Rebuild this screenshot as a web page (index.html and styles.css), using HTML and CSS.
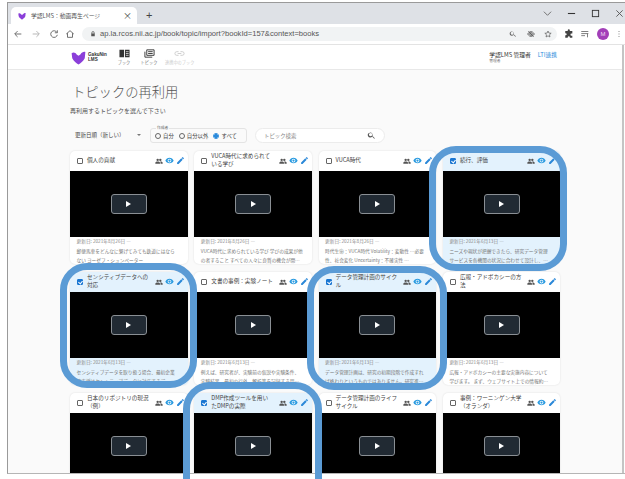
FILE: index.html
```html
<!DOCTYPE html>
<html lang="ja">
<head>
<meta charset="utf-8">
<title>学認LMS：動画再生ページ</title>
<link rel="stylesheet" href="styles.css">
</head>
<body>
<svg class="defs" width="0" height="0" aria-hidden="true">
  <symbol id="heart" viewBox="0 0 24 24"><path d="M1 5C4 3 7 4 9 7L12 9L15 7C17 4 20 2 23 3L22 13C20 18 15 21 12 23C9 21 4 18 2 13Z" fill="#8b3fd9"/></symbol>
  <symbol id="people" viewBox="0 0 24 24"><path d="M8 5a3.6 3.6 0 1 1 0 7.200a3.600 3.600 0 0 1 0-7.200zM16 5a3.600 3.600 0 1 1 0 7.200a3.600 3.600 0 0 1 0-7.200zM1 20v-3c0-2.500 4-3.500 7-3.500s7 1 7 3.500v3zM16.500 20v-3c0-1.300-.6-2.400-1.600-3.300c3-.5 8.100.6 8.100 3.300v3z" fill="#555"/></symbol>
  <symbol id="eye" viewBox="0 0 24 24"><path d="M12 4.500C7 4.500 2.700 7.600 1 12c1.700 4.400 6 7.500 11 7.500s9.300-3.100 11-7.500c-1.700-4.400-6-7.500-11-7.500zm0 12.500a5 5 0 1 1 0-10a5 5 0 0 1 0 10zm0-8a3 3 0 1 0 0 6a3 3 0 0 0 0-6z" fill="#2b9be0"/></symbol>
  <symbol id="pencil" viewBox="0 0 24 24"><path d="M3 17.200V21h3.800L17.800 9.900l-3.700-3.700zM20.700 7a1 1 0 0 0 0-1.400l-2.300-2.300a1 1 0 0 0-1.400 0l-1.800 1.800l3.700 3.700z" fill="#2b88d8"/></symbol>
  <symbol id="search" viewBox="0 0 24 24"><path d="M15.500 14h-.8l-.3-.3A6.500 6.500 0 1 0 14 14.400l.3.300v.8l5 5l1.500-1.500zm-6 0a4.500 4.500 0 1 1 0-9a4.500 4.500 0 0 1 0 9z" fill="currentColor"/></symbol>
</svg>

<div class="window">
  <div class="tabstrip">
    <div class="tab">
      <svg class="tab-icon"><use href="#heart"/></svg>
      <span class="tab-title">学認LMS：動画再生ページ</span>
      <span class="tab-close">×</span>
    </div>
    <span class="tab-new">+</span>
    <div class="win-controls">
      <svg class="win-btn" viewBox="0 0 10 10"><path d="M1 3l4 4l4-4" fill="none" stroke="#666" stroke-width="1"/></svg>
      <svg class="win-btn" viewBox="0 0 10 10"><path d="M1 5h8" stroke="#333" stroke-width="1.200"/></svg>
      <svg class="win-btn" viewBox="0 0 10 10"><rect x="1.500" y="1.500" width="7" height="7" fill="none" stroke="#333" stroke-width="1"/></svg>
      <svg class="win-btn" viewBox="0 0 10 10"><path d="M1.500 1.500l7 7M8.500 1.500l-7 7" stroke="#555" stroke-width="1"/></svg>
    </div>
  </div>

  <div class="toolbar">
    <svg class="tool" viewBox="0 0 24 24"><path d="M20 12H5M11 5l-7 7l7 7" fill="none" stroke="#555" stroke-width="2"/></svg>
    <svg class="tool" viewBox="0 0 24 24"><path d="M4 12h15M13 5l7 7l-7 7" fill="none" stroke="#aaa" stroke-width="2"/></svg>
    <svg class="tool" viewBox="0 0 24 24"><path d="M19 8a8 8 0 1 0 1 6M20 3v6h-6" fill="none" stroke="#555" stroke-width="2"/></svg>
    <svg class="tool tool-home" viewBox="0 0 24 24"><path d="M3 12l9-8l9 8M6 10v10h12V10" fill="none" stroke="#555" stroke-width="2"/></svg>
    <div class="omnibox">
      <svg class="lock" viewBox="0 0 24 24"><path d="M6 10V7a6 6 0 0 1 12 0v3h1v11H5V10zm3 0h6V7a3 3 0 0 0-6 0z" fill="#555"/></svg>
      <span class="url">ap.la.rcos.nii.ac.jp/book/topic/import?bookId=157&amp;context=books</span>
      <svg class="omni-icon"><use href="#search"/></svg>
      <svg class="omni-icon" viewBox="0 0 24 24"><path d="M2 12c3-5 6-7 10-7s7 2 10 7c-3 5-6 7-10 7s-7-2-10-7zM12 8a4 4 0 1 0 0 8a4 4 0 0 0 0-8zM4 4l16 16" fill="none" stroke="#555" stroke-width="2.500"/></svg>
      <svg class="omni-icon" viewBox="0 0 24 24"><path d="M12 3l2.700 6.200l6.800.6l-5.100 4.500l1.500 6.700L12 17.500L6.100 21l1.500-6.700L2.500 9.800l6.800-.6z" fill="none" stroke="#555" stroke-width="2"/></svg>
    </div>
    <svg class="tool tool-ext" viewBox="0 0 24 24"><path d="M9 3a2.500 2.500 0 0 1 5 0v2h6v6h-2a2.500 2.500 0 0 0 0 5h2v5h-6v-1a2.500 2.500 0 0 0-5 0v1H3v-6h1a2.500 2.500 0 0 0 0-5H3V5h6z" fill="#444"/></svg>
    <svg class="tool tool-queue" viewBox="0 0 24 24"><path d="M3 6h17M3 11h17M3 16h9M18 11v9" fill="none" stroke="#666" stroke-width="2"/></svg>
    <span class="avatar">M</span>
    <svg class="tool tool-menu" viewBox="0 0 24 24"><path d="M12 4v2M12 11v2M12 18v2" stroke="#555" stroke-width="3"/></svg>
  </div>

  <div class="app">
    <header class="appbar">
      <svg class="logo"><use href="#heart"/></svg>
      <span class="logo-text">GakuNin<br>LMS</span>
      <nav class="nav">
        <a class="nav-item">
          <svg class="nav-icon" viewBox="0 0 24 18"><path d="M1 1h10v16H1zM13 1h10v16H13z" fill="#333"/><path d="M15 5h6M15 9h6M15 13h6" stroke="#fff" stroke-width="1.500"/></svg>
          <span>ブック</span>
        </a>
        <a class="nav-item">
          <svg class="nav-icon" viewBox="0 0 24 18"><path d="M6 1h16v12H6z" fill="none" stroke="#333" stroke-width="2"/><path d="M2 5v12h16" fill="none" stroke="#333" stroke-width="2"/><path d="M9 5h10M9 9h10" stroke="#333" stroke-width="2"/></svg>
          <span>トピック</span>
        </a>
        <a class="nav-item nav-faint">
          <svg class="nav-icon" viewBox="0 0 24 18"><path d="M10 5H6a4 4 0 0 0 0 8h4M14 5h4a4 4 0 0 1 0 8h-4M8 9h8" fill="none" stroke="#ccc" stroke-width="2"/></svg>
          <span>連携中のブック</span>
        </a>
      </nav>
      <div class="account">
        <span class="user">学認LMS 管理者<small>管理者</small></span>
        <span class="lti">LTI連携</span>
      </div>
    </header>

    <main class="content">
      <h1 class="page-title">トピックの再利用</h1>
      <p class="page-lead">再利用するトピックを選んで下さい</p>

      <div class="filters">
        <span class="sort">更新日順（新しい）<i class="caret"></i></span>
        <fieldset class="owner">
          <legend>作成者</legend>
          <label><i class="radio"></i>自分</label>
          <label><i class="radio"></i>自分以外</label>
          <label><i class="radio radio-on"></i>すべて</label>
        </fieldset>
        <div class="search">
          <span>トピック検索</span>
          <svg class="search-icon"><use href="#search"/></svg>
        </div>
      </div>

      <div class="grid">
        <article class="card">
          <div class="card-head"><i class="check"></i><h2>個人の貢献</h2><div class="actions"><svg><use href="#people"/></svg><svg><use href="#eye"/></svg><svg><use href="#pencil"/></svg></div></div>
          <div class="video"><span class="play"><i></i></span></div>
          <div class="card-body"><p class="date">更新日: 2021年8月26日 —</p><p class="desc">郵便馬車をどんなに繋げてみても鉄道にはならない ヨーゼフ・シュンペーター</p></div>
        </article>
        <article class="card">
          <div class="card-head"><i class="check"></i><h2>VUCA時代に求められている学び</h2><div class="actions"><svg><use href="#people"/></svg><svg><use href="#eye"/></svg><svg><use href="#pencil"/></svg></div></div>
          <div class="video"><span class="play"><i></i></span></div>
          <div class="card-body"><p class="date">更新日: 2021年8月26日 —</p><p class="desc">VUCA時代に求められている学び 学びの成果が他の者すること すべての人々に良質の機会が開…</p></div>
        </article>
        <article class="card">
          <div class="card-head"><i class="check"></i><h2>VUCA時代</h2><div class="actions"><svg><use href="#people"/></svg><svg><use href="#eye"/></svg><svg><use href="#pencil"/></svg></div></div>
          <div class="video"><span class="play"><i></i></span></div>
          <div class="card-body"><p class="date">更新日: 2021年8月26日 —</p><p class="desc">時代生命：VUCA時代 Volatility：変動性 …必要性、社会変化 Uncertainty：不確実性 …</p></div>
        </article>
        <article class="card card-on">
          <div class="card-head"><i class="check"></i><h2>続行、評価</h2><div class="actions"><svg><use href="#people"/></svg><svg><use href="#eye"/></svg><svg><use href="#pencil"/></svg></div></div>
          <div class="video"><span class="play"><i></i></span></div>
          <div class="card-body"><p class="date">更新日: 2021年6月13日 —</p><p class="desc">ニーズや現状が把握できたら、研究データ管理サービスを各機関の状況に合わせて設計し、…</p></div>
        </article>

        <article class="card card-on">
          <div class="card-head"><i class="check"></i><h2>センシティブデータへの対応</h2><div class="actions"><svg><use href="#people"/></svg><svg><use href="#eye"/></svg><svg><use href="#pencil"/></svg></div></div>
          <div class="video"><span class="play"><i></i></span></div>
          <div class="card-body"><p class="date">更新日: 2021年6月13日 —</p><p class="desc">センシティブデータを取り扱う場合、最初企業等支援はセンシティブデータに対応するデー…</p></div>
        </article>
        <article class="card">
          <div class="card-head"><i class="check"></i><h2>文書の事例：実験ノート</h2><div class="actions"><svg><use href="#people"/></svg><svg><use href="#eye"/></svg><svg><use href="#pencil"/></svg></div></div>
          <div class="video"><span class="play"><i></i></span></div>
          <div class="card-body"><p class="date">更新日: 2021年6月13日 —</p><p class="desc">例えば、研究者が、実験前の仮説や実験条件、実験結果、最初の行外、解析等を記録する用…</p></div>
        </article>
        <article class="card card-on">
          <div class="card-head"><i class="check"></i><h2>データ管理計画のサイクル</h2><div class="actions"><svg><use href="#people"/></svg><svg><use href="#eye"/></svg><svg><use href="#pencil"/></svg></div></div>
          <div class="video"><span class="play"><i></i></span></div>
          <div class="card-body"><p class="date">更新日: 2021年6月13日 —</p><p class="desc">データ管理計画は、研究の初期段階で作成すれば終わりというものではありません。研究進…</p></div>
        </article>
        <article class="card">
          <div class="card-head"><i class="check"></i><h2>広報・アドボカシーの方法</h2><div class="actions"><svg><use href="#people"/></svg><svg><use href="#eye"/></svg><svg><use href="#pencil"/></svg></div></div>
          <div class="video"><span class="play"><i></i></span></div>
          <div class="card-body"><p class="date">更新日: 2021年6月13日 —</p><p class="desc">広報・アドボカシーの主要な実施内容について学びます。 まず、ウェブサイト上での情報約…</p></div>
        </article>

        <article class="card">
          <div class="card-head"><i class="check"></i><h2>日本のリポジトリの現況（例）</h2><div class="actions"><svg><use href="#people"/></svg><svg><use href="#eye"/></svg><svg><use href="#pencil"/></svg></div></div>
          <div class="video"><span class="play"><i></i></span></div>
        </article>
        <article class="card card-on">
          <div class="card-head"><i class="check"></i><h2>DMP作成ツールを用いたDMPの実際</h2><div class="actions"><svg><use href="#people"/></svg><svg><use href="#eye"/></svg><svg><use href="#pencil"/></svg></div></div>
          <div class="video"><span class="play"><i></i></span></div>
        </article>
        <article class="card">
          <div class="card-head"><i class="check"></i><h2>データ管理計画のライフサイクル</h2><div class="actions"><svg><use href="#people"/></svg><svg><use href="#eye"/></svg><svg><use href="#pencil"/></svg></div></div>
          <div class="video"><span class="play"><i></i></span></div>
        </article>
        <article class="card">
          <div class="card-head"><i class="check"></i><h2>事例：ワーニンゲン大学（オランダ）</h2><div class="actions"><svg><use href="#people"/></svg><svg><use href="#eye"/></svg><svg><use href="#pencil"/></svg></div></div>
          <div class="video"><span class="play"><i></i></span></div>
        </article>
      </div>
    </main>
  </div>
</div>

<!-- Callout rings laid over the selected topics -->
<div class="rings">
  <div class="ring ring-a"></div>
  <div class="ring ring-b"></div>
  <div class="ring ring-c"></div>
  <div class="ring ring-d"></div>
</div>
</body>
</html>
```

FILE: styles.css
```css
* { box-sizing: border-box; }

html, body {
  margin: 0;
  height: 479px;
  overflow: hidden;
  background: #fff;
}

body {
  position: relative;
  padding: 2px 0 0 7px;
  font-family: "Noto Sans CJK JP", "Noto Sans", sans-serif;
  color: #333;
}

.defs { position: absolute; }

.window {
  height: 472px;
  display: flex;
  flex-direction: column;
  overflow: hidden;
  border-top: 1px solid #9a9a9a;
  border-left: 1px solid #9a9a9a;
  border-bottom: 1px solid #b5b5b5;
}

/* Browser chrome */
.tabstrip {
  flex: none;
  height: 21px;
  display: flex;
  align-items: flex-end;
  background: #dee1e6;
  padding-left: 3px;
}

.tab {
  width: 126px;
  height: 17px;
  display: flex;
  align-items: center;
  padding: 0 5px 0 7px;
  background: #fff;
  border-radius: 5px 5px 0 0;
}

.tab-icon { width: 8px; height: 8px; margin-right: 5px; }
.tab-title { flex: 1; font-size: 5.800px; color: #555; white-space: nowrap; }
.tab-close { font-size: 9px; line-height: 1; color: #444; }

.tab-new {
  align-self: center;
  margin: 3px 0 0 9px;
  font: 11px/1 "Liberation Sans", sans-serif;
  color: #444;
}

.win-controls {
  margin-left: auto;
  align-self: center;
  display: flex;
  gap: 15px;
  padding-right: 1px;
}

.win-btn { width: 9px; height: 9px; }

.toolbar {
  flex: none;
  height: 21px;
  display: flex;
  align-items: center;
  background: #fff;
  border-bottom: 1px solid #e3e3e3;
  padding-left: 5px;
  gap: 8px;
}

.tool { flex: none; width: 10px; height: 10px; }
.tool-home { margin-left: -2px; }

.omnibox {
  flex: none;
  width: 475px;
  height: 14px;
  margin-left: -1px;
  display: flex;
  align-items: center;
  padding: 0 5px 0 8px;
  background: #f1f3f4;
  border-radius: 7px;
}

.lock { width: 6px; height: 6px; margin-right: 4px; }

.url {
  flex: 1;
  font: 7.600px/1 "Liberation Sans", sans-serif;
  color: #555;
  white-space: nowrap;
}

.omni-icon { width: 8px; height: 8px; margin-left: 9.500px; color: #666; }

.tool-ext { margin-left: -1px; }
.tool-queue { margin-left: -2px; }

.avatar {
  flex: none;
  width: 12px;
  height: 12px;
  margin-left: -1px;
  border-radius: 50%;
  background: #a23fb8;
  color: #eedcf3;
  font: 6px/12px "Liberation Sans", sans-serif;
  text-align: center;
}

.tool-menu { margin-left: -2px; width: 8px; }

/* Application */
.app {
  flex: 1;
  min-height: 0;
  margin-right: 1px;
  background: #fafafa;
  border-right: 2px solid #c4c4c4;
}

.appbar {
  height: 25px;
  display: flex;
  align-items: center;
  padding: 0 65px 0 63px;
  background: #fff;
  border-bottom: 1px solid #e8e8e8;
}

.logo { width: 15px; height: 15px; margin-right: 2px; }

.logo-text {
  width: 26px;
  font: bold 4.600px/5px "Liberation Sans", sans-serif;
  color: #333;
}

.nav { display: flex; gap: 7px; margin-left: 1px; }

.nav-item {
  display: flex;
  flex-direction: column;
  align-items: center;
  min-width: 18px;
  font-size: 4.200px;
  line-height: 5px;
  color: #777;
}

.nav-icon { width: 11px; height: 9px; margin-bottom: 2px; }
.nav-faint { color: #ccc; }

.account {
  margin-left: auto;
  display: flex;
  gap: 7px;
  align-items: flex-start;
}

.user {
  display: flex;
  flex-direction: column;
  font-size: 5.800px;
  line-height: 7px;
  color: #333;
}

.user small { font-size: 3.800px; line-height: 5px; color: #777; }
.lti { font-size: 5.800px; line-height: 7px; color: #2b8adb; }

.content { padding: 13px 60px 0 62px; }

.page-title {
  margin: 0 0 0 2px;
  font-size: 13.300px;
  line-height: 18px;
  font-weight: 300;
  color: #555;
}

.page-lead {
  margin: 5px 0 0;
  font-size: 6px;
  line-height: 9px;
  color: #555;
}

.filters {
  height: 22px;
  margin-top: 6px;
  display: flex;
  align-items: flex-end;
}

.sort {
  display: flex;
  align-items: center;
  width: 80px;
  padding: 0 0 2px 5px;
  font-size: 5.500px;
  line-height: 12px;
  color: #444;
}

.caret {
  margin-left: 12px;
  border: 2px solid transparent;
  border-top-color: #777;
  border-bottom: 0;
}

.owner {
  width: 97px;
  height: 17px;
  margin: 0;
  display: flex;
  align-items: center;
  gap: 5px;
  padding: 0 0 1px 4px;
  border: 1px solid #e4e4e4;
  border-radius: 3px;
  font-size: 5.400px;
  color: #444;
}

.owner legend {
  padding: 0 1px;
  margin-left: 1px;
  font-size: 3.800px;
  line-height: 4px;
  color: #666;
}

.owner label { display: flex; align-items: center; gap: 2px; }

.radio {
  width: 6px;
  height: 6px;
  border: 1px solid #666;
  border-radius: 50%;
}

.radio-on {
  border-color: #2b8adb;
  background: radial-gradient(circle, #2b8adb 0 1.600px, #fff 1.900px);
}

.search {
  width: 130px;
  height: 15px;
  margin-left: 8px;
  display: flex;
  align-items: center;
  justify-content: space-between;
  padding: 0 8px;
  background: #fff;
  border: 1px solid #ececec;
  border-radius: 8px;
  font-size: 5.400px;
  color: #888;
}

.search-icon { width: 9px; height: 9px; color: #555; }

.grid {
  margin-top: 8px;
  display: grid;
  grid-template-columns: repeat(4, 117.500px);
  grid-auto-rows: 113px;
  gap: 8px 6.800px;
}

.card {
  display: flex;
  flex-direction: column;
  overflow: hidden;
  background: #fff;
  border-radius: 5px;
  box-shadow: 0 0 2px rgba(0, 0, 0, .12);
}

.card-on { background: #e3f2fd; }

.card-head {
  flex: none;
  height: 19.500px;
  display: flex;
  align-items: center;
  padding: 0 3px 0 7px;
}

.check {
  flex: none;
  width: 6px;
  height: 6px;
  margin-right: 4px;
  border: 1px solid #666;
  border-radius: 1px;
}

.card-on .check {
  border-color: #1976d2;
  background: #1976d2;
  position: relative;
}

.card-on .check::after {
  content: "";
  position: absolute;
  left: 1px;
  top: 0;
  width: 2px;
  height: 3px;
  border: solid #fff;
  border-width: 0 1px 1px 0;
  transform: rotate(40deg);
}

.card-head h2 {
  flex: none;
  width: 62px;
  margin: 0;
  font-size: 5.600px;
  line-height: 7.500px;
  font-weight: 400;
  color: #444;
}

.actions {
  margin-left: auto;
  display: flex;
  align-items: center;
  gap: 2px;
}

.actions svg { width: 8px; height: 8px; }
.actions svg + svg { width: 9px; height: 9px; }

.video {
  flex: none;
  height: 66.500px;
  display: flex;
  align-items: center;
  justify-content: center;
  background: #000;
}

.play {
  width: 36px;
  height: 20px;
  display: flex;
  align-items: center;
  justify-content: center;
  background: #212a33;
  border: 1px solid #8a8f94;
  border-radius: 3px;
}

.play i {
  border-style: solid;
  border-width: 3px 0 3px 5.500px;
  border-color: transparent transparent transparent #fff;
}

.card-body { padding: 1px 9px 0 6.500px; color: #888; }

.date {
  margin: 0;
  font-size: 4.700px;
  line-height: 7px;
}

.desc {
  margin: 2px 0 0;
  font-size: 4.700px;
  line-height: 8.500px;
  color: #777;
}

/* Callouts */
.rings {
  position: absolute;
  inset: 0;
  overflow: hidden;
  pointer-events: none;
}

.ring {
  position: absolute;
  border: 7px solid #5b9bd5;
  border-radius: 27px;
}

.ring-a { left: 429px; top: 146px; width: 138px; height: 125px; }
.ring-b { left: 60px; top: 263px; width: 137px; height: 125px; }
.ring-c { left: 307px; top: 266px; width: 140px; height: 124px; }
.ring-d { left: 183px; top: 382px; width: 139px; height: 125px; }
```
